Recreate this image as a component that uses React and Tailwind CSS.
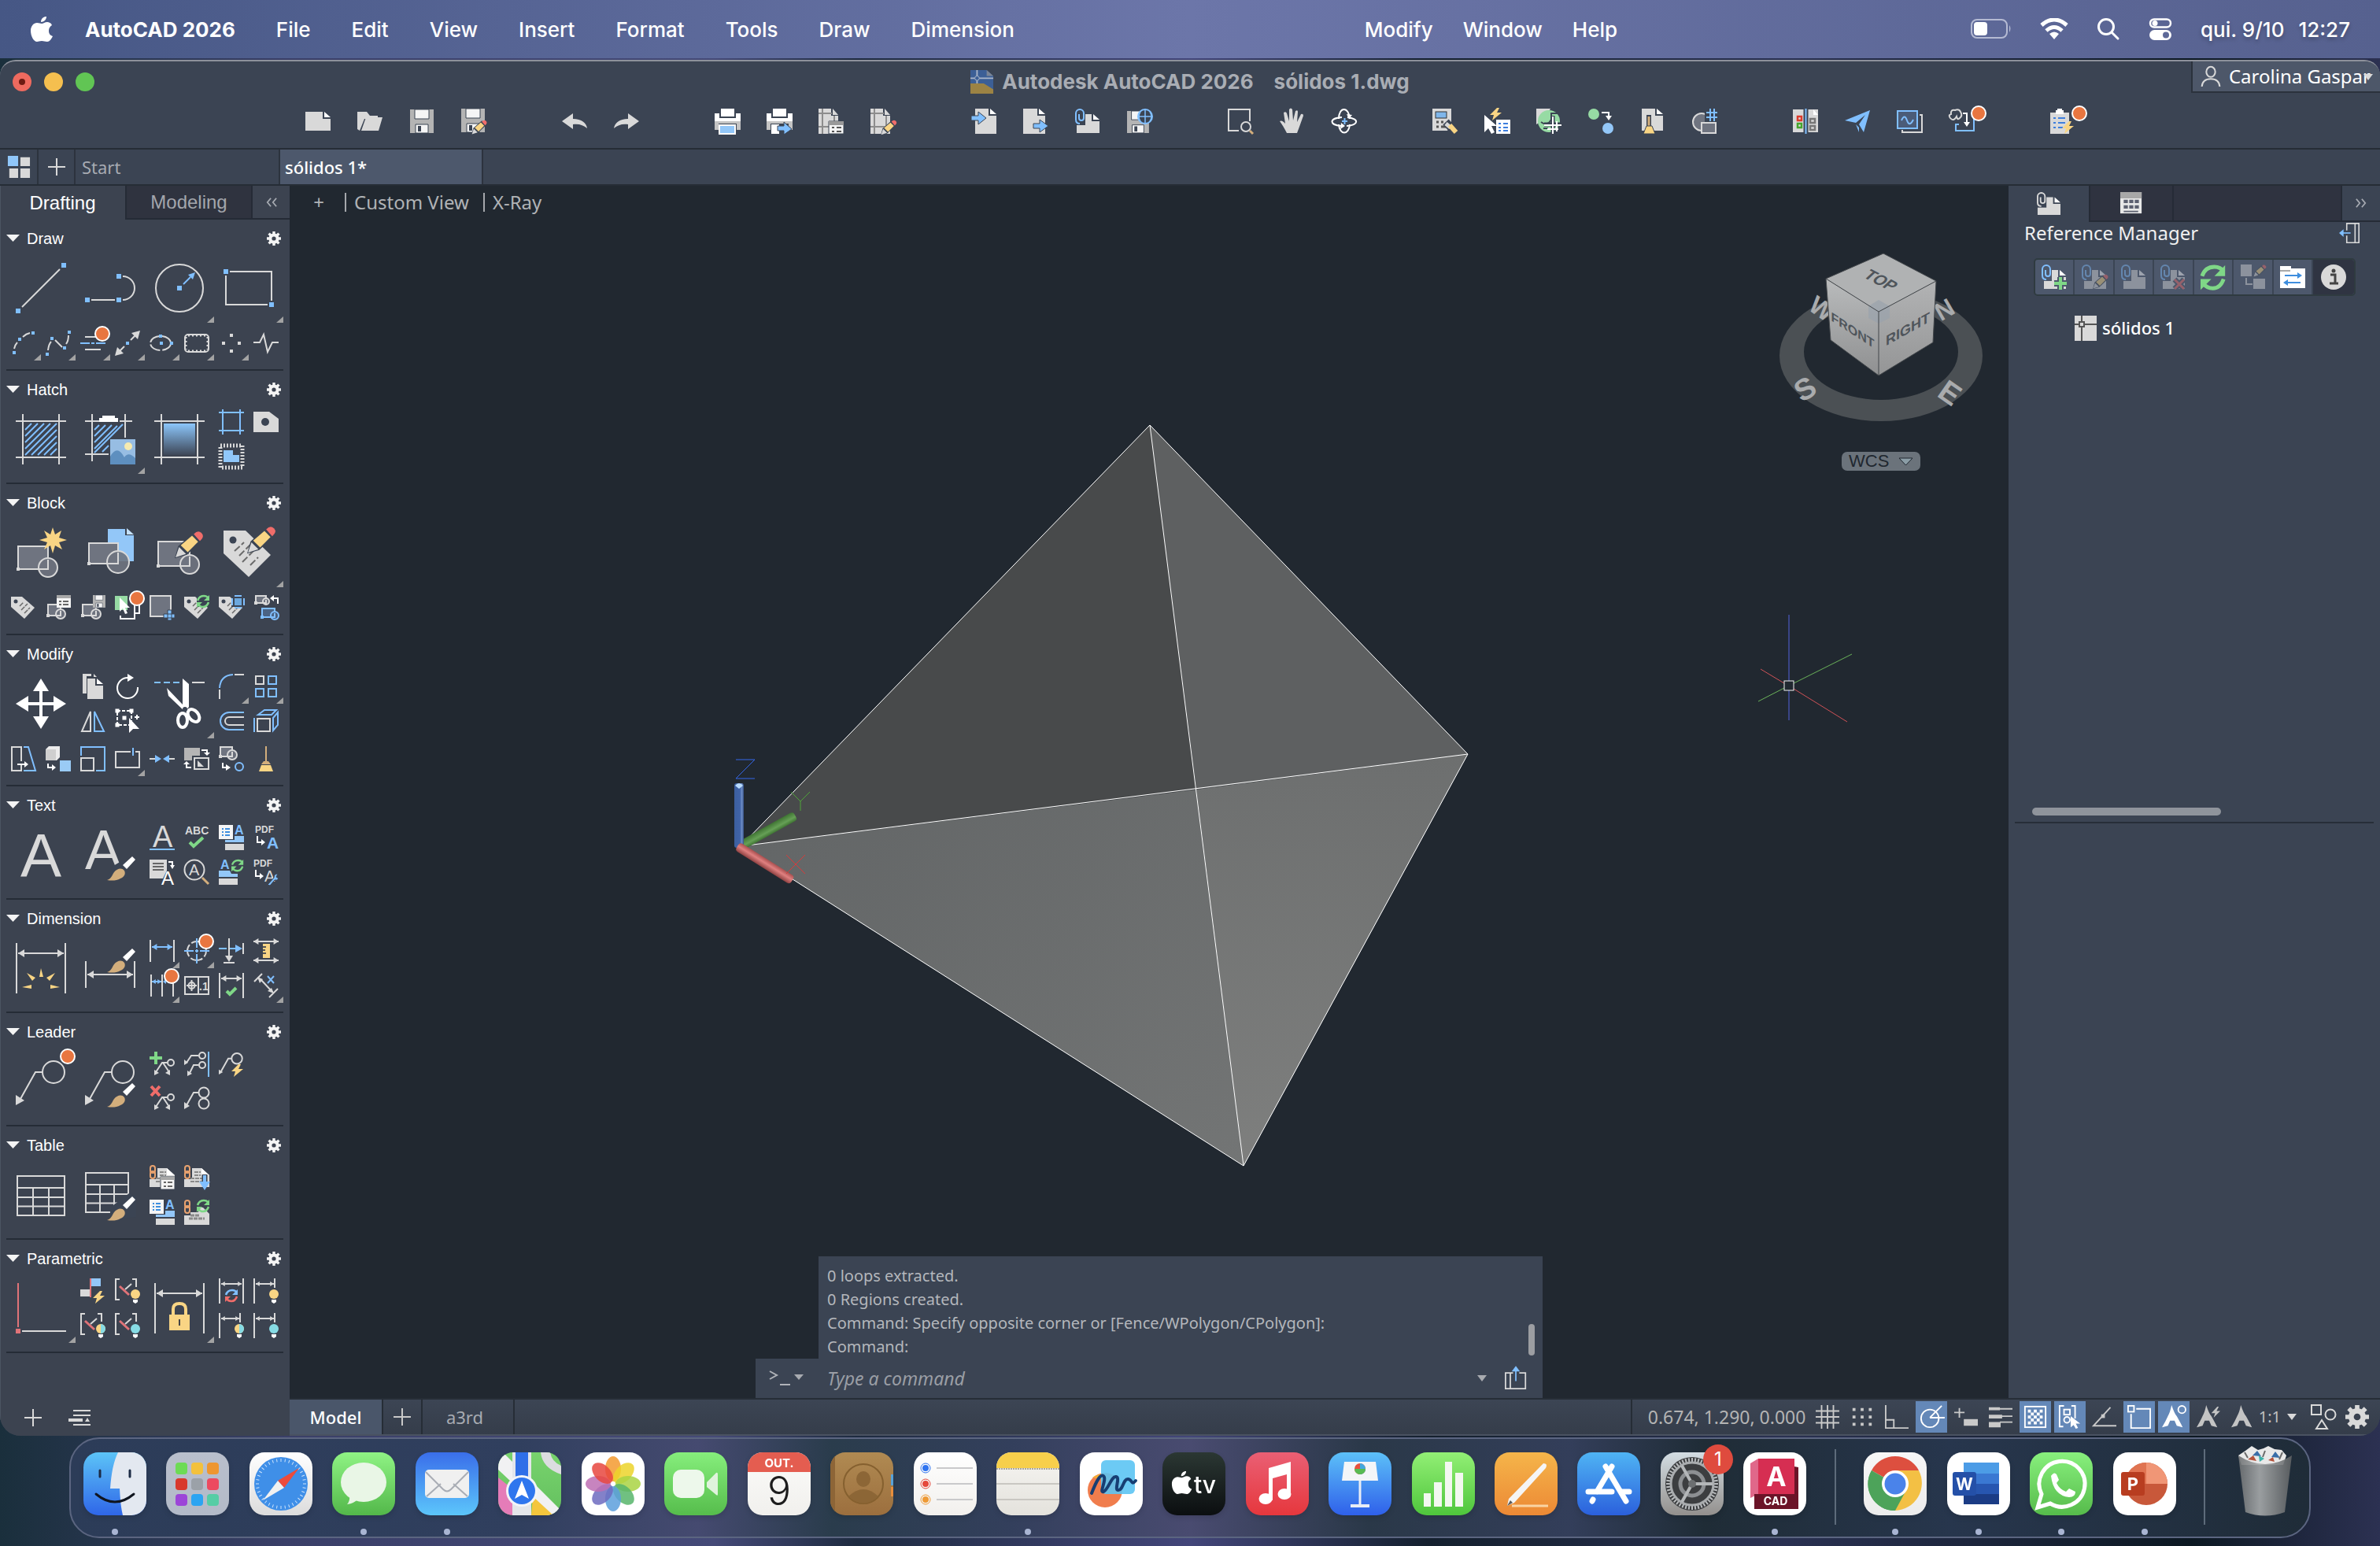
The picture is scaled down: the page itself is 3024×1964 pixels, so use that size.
import clsx from 'clsx';

const G = '#d9d9d9';
const B = '#80bfff';
const W = '#ffffff';
const Y = '#f9d584';
const GR = '#7fd787';
const R = '#f06d6a';
const BG = '#3b4453';
const TAN = '#d3ae7c';
const CY = '#86dbe4';

/* ---------- shared icon parts ---------- */

function Ico({ size = 32, box = size > 32 ? size : 32, children, className }) {
  return (
    <svg
      width={size}
      height={size}
      viewBox={`0 0 ${box} ${box}`}
      fill="none"
      aria-hidden="true"
      className={clsx('overflow-visible shrink-0', className)}
    >
      {children}
    </svg>
  );
}

const Sq = ({ x, y, s = 6, c = B }) => <rect x={x - s / 2} y={y - s / 2} width={s} height={s} fill={c} />;
const Dot = ({ x = 28, y = 4 }) => <circle cx={x} cy={y} r="9" fill="#e87640" stroke={W} strokeWidth="2" />;

const Bolt = ({ x, y, c = Y }) => <path transform={`translate(${x} ${y})`} d="M9 0L0 9h5l-2 7L15 6H9l3-6z" fill={c} />;

const Pencil = ({ x, y, s = 1 }) => (
  <g transform={`translate(${x} ${y}) scale(${s})`}>
    <path d="M0 32L4 18 22 2l10 9-18 17z" fill={BG} />
    <path d="M1 31l4-12 8 8z" fill={G} />
    <path d="M7 17L20 6l7 7-12 12z" fill={Y} />
    <path d="M22 4q5-5 9-1t-2 9z" fill={R} />
  </g>
);

const Brush = ({ x, y }) => (
  <g transform={`translate(${x} ${y})`}>
    <path d="M20 11L32 0l4 4-11 12z" fill={W} />
    <path d="M0 30c6-2 6-6 9-10 4-5 10-6 13-2 2 4 0 8-5 10-5 3-11 3-17 2z" fill={TAN} />
  </g>
);

const Refresh = ({ x, y, s = 1, c = GR, c2 = c }) => (
  <g transform={`translate(${x} ${y}) scale(${s})`} fill="none" strokeWidth="2.5">
    <path d="M1 7q2-6 8-6 4 0 6 3" stroke={c} />
    <path d="M16 0v7h-7z" fill={c} />
    <path d="M15 9q-2 6-7 6-4 0-6-3" stroke={c2} />
    <path d="M0 16V9h7z" fill={c2} />
  </g>
);

const Clip = ({ c = B }) => <path d="M6 19q-5 0-5-5V6a5 5 0 0 1 10 0v6a3 3 0 0 1-6 0V7" stroke={c} strokeWidth="2" />;
const ChainS = ({ c = '#e8a26f' }) => (
  <g stroke={c} strokeWidth="2">
    <rect x="1" y="1" width="6" height="9" rx="3" />
    <rect x="1" y="8" width="6" height="9" rx="3" />
  </g>
);

const Doc = ({ x = 0, y = 0, w = 22, h = 24, c = G }) => (
  <g transform={`translate(${x} ${y})`} fill={c}>
    <path d={`M0 0h${w - 10}v9h10v${h - 9}H0z`} />
    <path d={`M${w - 8} 0l8 7h-8z`} fill={W} />
  </g>
);

const Floppy = ({ x = 0, y = 0, s = 1 }) => (
  <g transform={`translate(${x} ${y}) scale(${s})`}>
    <path d="M0 0h30v30H0z" fill="#b4b4b4" />
    <path d="M6 0h18v12H6z" fill="#f5f5f5" stroke={BG} />
    <path d="M7 19h16v11H7z" fill="#f5f5f5" stroke={BG} />
    <path d="M10 21h4v7h-4z" fill={BG} />
  </g>
);

const Block = ({ x = 0, y = 0, w = 38, h = 29, r = 12, sw = 2, c = G, f = '#6f7480' }) => (
  <g transform={`translate(${x} ${y})`} stroke={c} strokeWidth={sw}>
    <rect width={w} height={h} fill={f} />
    <circle cx={w} cy={h - 2} r={r} fill={f} fillOpacity="0.9" />
    <path d={`M${w} ${h - r}V${h}H${w - r}`} />
    <rect x="-2" y={h - 2} width="4" height="4" fill={c} stroke="none" />
  </g>
);

const Tag = () => (
  <g>
    <path d="M0 2h14l16 14-13 14L0 15z" fill={G} />
    <circle cx="6" cy="8" r="2.5" fill={BG} />
    <path d="M11 14l5-5M13 19l8-8M17 23l7-7" stroke="#6a6a6a" strokeWidth="1.5" strokeDasharray="6 1" />
  </g>
);

// horizontal dimension with two arrowheads
const Dim = ({ x1, x2, y, c = G, a = 4 }) => (
  <g>
    <path d={`M${x1} ${y}H${x2}`} stroke={c} strokeWidth="2" />
    <path d={`M${x1} ${y}l${a * 1.6} ${-a}v${a * 2}zM${x2} ${y}l${-a * 1.6} ${-a}v${a * 2}z`} fill={c} />
  </g>
);

const Bulb = ({ c, half }) => (
  <g>
    <circle cx="26" cy="20" r="6" fill={c} />
    {half && <path d="M26 14a6 6 0 0 1 0 12z" fill={CY} />}
    <path d="M23 27h6v3l-3 2-3-2z" fill={W} />
  </g>
);

const Frame = ({ children }) => (
  <>
    <path d="M0 9H64M0 55H64M9 0V64M55 0V64" stroke={G} strokeWidth="2" />
    {children}
  </>
);
const Stripes = () => (
  <path d="M12 20l8-8M12 28l16-16M12 36l24-24M12 44l32-32M12 52l40-40M20 52l32-32M28 52l24-24M36 52l16-16M44 52l8-8" stroke={B} strokeWidth="2" />
);

const Leader = ({ x = 0, y = 0, s = 1, sw = 2 }) => (
  <g transform={`translate(${x} ${y}) scale(${s})`}>
    <path d="M6 48L25 14h9" stroke={G} strokeWidth={sw} />
    <circle cx="48" cy="14" r="14" stroke={G} strokeWidth={sw} />
    <path d="M0 56V43l11 7z" fill={G} />
  </g>
);
const MiniLeader = () => (
  <g stroke={G} strokeWidth="2">
    <circle cx="27" cy="14" r="4" />
    <path d="M22 14h-6L8 26M17 14l8 12" />
    <path d="M6 30v-7l6 4zM26 30v-7l-6 4z" fill={G} stroke="none" />
  </g>
);

const Grid = ({ x = 0, y = 0, w = 60, h = 50 }) => (
  <path
    transform={`translate(${x} ${y})`}
    d={`M0 0h${w}v${h}H0zM0 ${h * 0.3}h${w}M0 ${h * 0.54}h${w}M0 ${h * 0.77}h${w}M${w / 3} ${h * 0.3}V${h}M${(w * 2) / 3} ${h * 0.3}V${h}`}
    stroke={G}
    strokeWidth="2"
  />
);

const T = ({ x, y, size, c = G, w = 400, children }) => (
  <text x={x} y={y} fontSize={size} fill={c} fontWeight={w} fontFamily="'Liberation Sans', sans-serif">{children}</text>
);

const GearPath = ({ size = 18, color = '#f4f4f4' }) => (
  <Ico size={size} box={18}>
    <circle cx="9" cy="9" r="4.6" stroke={color} strokeWidth="4" />
    <path d="M9 0v4M9 14v4M0 9h4M14 9h4M2.6 2.6l3 3M12.4 12.4l3 3M15.4 2.6l-3 3M5.6 12.4l-3 3" stroke={color} strokeWidth="3.4" />
  </Ico>
);

/* ---------- tool palettes ---------- */
// each tool: [label, drawing, has flyout]

const draw = {
  title: 'Draw',
  main: [
    ['Line', <><path d="M8 56L56 8" stroke={G} strokeWidth="2" /><Sq x={3} y={61} /><Sq x={61} y={3} /></>],
    ['Polyline', <><path d="M8 47h30M48 17a15 15 0 0 1 0 30" stroke={G} strokeWidth="2" /><Sq x={3} y={47} /><Sq x={43} y={47} /><Sq x={43} y={17} /></>],
    ['Circle', <><circle cx="32" cy="32" r="30" stroke={G} strokeWidth="2" /><Sq x={32} y={32} /><path d="M37 27l9-9" stroke={B} strokeWidth="2" /><path d="M52 12l-9 3 6 6z" fill={B} /></>, true],
    ['Rectangle', <><path d="M8 11h53v37M3 16v37h53" stroke={G} strokeWidth="2" /><Sq x={3} y={11} /><Sq x={61} y={53} /></>, true],
  ],
  extra: [
    ['Arc', <><path d="M4 23q1-5 4-8M15 8q4-4 9-5" stroke={G} strokeWidth="2" /><Sq x={4} y={28} s={4} /><Sq x={11} y={11} s={4} /><Sq x={28} y={3} s={4} /></>, true],
    ['Spline', <><path d="M3 25q1-8 4-11M12 12l9 9M26 17q3-4 3-11" stroke={G} strokeWidth="2" /><Sq x={2} y={30} s={4} /><Sq x={8} y={10} s={4} /><Sq x={24} y={22} s={4} /><Sq x={30} y={2} s={4} /></>, true],
    ['Construction line', <><path d="M6 8h14M6 24h20" stroke={G} strokeWidth="2" /><path d="M0 16h12M14 16h4M20 16h12" stroke={B} strokeWidth="2" /><Dot /></>, true],
    ['Ray', <><path d="M5 27l7-7M20 12l7-7" stroke={G} strokeWidth="2" /><path d="M32 0l-3 11-8-8zM0 32l3-11 8 8z" fill={G} /><Sq x={16} y={16} s={4} /></>, true],
    ['Ellipse', <><ellipse cx="14" cy="16" rx="13" ry="9" stroke={G} strokeWidth="2" strokeDasharray="15 3" /><Sq x={14} y={7} s={4} /><Sq x={15} y={16} s={4} /><Sq x={28} y={16} s={4} /></>, true],
    ['Revision cloud', <><rect x="1" y="5" width="30" height="22" rx="4" stroke={G} strokeWidth="2" /><path d="M5 6h23M5 26h23M2 8v16M30 8v16" stroke={G} strokeWidth="3" strokeDasharray="2 3" /></>, true],
    ['Points', <><Sq x={16} y={6} s={4} c={G} /><Sq x={16} y={26} s={4} c={G} /><Sq x={6} y={16} s={4} c={G} /><Sq x={26} y={16} s={4} c={G} /></>, true],
    ['Break line', <path d="M0 15h8l5-10 5 22 6-12h8" stroke={G} strokeWidth="2" />],
  ],
};

const hatch = {
  title: 'Hatch',
  main: [
    ['Hatch', <Frame><Stripes /></Frame>],
    ['Super hatch', <>
      <path d="M0 9h18M44 9h16M0 51h30M9 0v60M51 0v30" stroke={G} strokeWidth="2" />
      <path d="M12 20l6-6M12 28l14-14M12 36l22-22M12 44l29-29M12 49l36-36M22 48l8-8" stroke={B} strokeWidth="2" />
      <path d="M22 2h16v3h4v5H18V5h4z" fill={W} />
      <rect x="32" y="32" width="32" height="32" fill="#97bde3" />
      <circle cx="55" cy="41" r="5" fill="#f5eab0" />
      <path d="M32 54q9-16 18 1 5-8 14 1v8H32z" fill="#5e8fbf" />
    </>, true],
    ['Gradient', <Frame>
      <defs><linearGradient id="hg" x1="0" y1="0" x2="0" y2="1"><stop offset="0" stopColor="#8cc6fb" /><stop offset="1" stopColor="#3e4757" /></linearGradient></defs>
      <rect x="12" y="12" width="40" height="40" fill="url(#hg)" />
    </Frame>],
    ['Boundary', <path d="M0 4h32M0 27h32M5 0v32M27 0v32" stroke={B} strokeWidth="2" />],
    ['Wipeout', <><path d="M0 3h20l12 9v17H0z" fill={G} /><circle cx="15" cy="16" r="5" fill={BG} /></>],
    ['Edit hatch', <><rect x="2" y="2" width="28" height="28" stroke={G} strokeWidth="5" strokeDasharray="2 2" /><path d="M6 8h12v6h8v9H6z" fill="#90c7fa" /></>],
  ],
};

const block = {
  title: 'Block',
  main: [
    ['Create block', <><Block x={3} y={24} /><path d="M47 0l3 9 8-5-3 9 10 3-10 3 4 9-9-5-3 10-3-10-8 5 4-9-10-3 10-3-4-9 8 5z" fill={Y} /></>],
    ['Insert block', <><path d="M29 2h22v8h11v33H29z" fill="#93c7f8" /><path d="M53 1l9 8h-9z" fill="#c4e1fb" /><Block x={5} y={20} w={37} h={26} r={14} /></>],
    ['Edit block', <><Block x={5} y={18} w={40} h={31} /><Pencil x={26} y={4} s={1.1} /></>],
    ['Edit attributes', <><path d="M0 4h28l32 31-28 28L0 33z" fill={G} /><circle cx="12" cy="16" r="4.5" fill={BG} /><path d="M14 30l12-11M20 36l14-14M24 44l16-16M34 48l10-10" stroke="#6a6a6a" strokeWidth="2" strokeDasharray="9 3" /><Pencil x={30} y={-2} s={1.1} /></>, true],
  ],
  extra: [
    ['Define attribute', <Tag />],
    ['Block palette', <><Block x={3} y={12} w={16} h={14} r={6} /><path d="M14 0h18v16H14z" fill="#f5f5f5" /><path d="M14 0h18v4H14z" fill="#a8a8a8" /><path d="M17 8h3M22 8h7M17 12h3M22 12h7" stroke="#666" strokeWidth="2" /></>],
    ['Save block', <><Block x={3} y={12} w={17} h={14} r={6} /><Floppy x={16} y={0} s={0.53} /></>],
    ['Select block', <><path d="M0 1h16v18H0z" fill="#97dba4" /><path d="M24 12h7v11h-5M7 26v4h18V12" stroke={W} strokeWidth="2" /><path d="M6 3v18l4-4 3 7 3-1-3-7h6z" fill={W} /><Dot /></>],
    ['Add block', <><rect x="1" y="1" width="26" height="26" fill="#6f7480" stroke={G} strokeWidth="2" /><path d="M18 24h14v5H18zM23 19h5v13h-5z" fill={B} stroke={BG} /></>],
    ['Sync attributes', <><Tag /><rect x="16" y="0" width="16" height="15" fill={BG} /><Refresh x={16} y={0} /></>],
    ['Manage attributes', <><Tag /><path d="M16 0h16v15H16z" fill={BG} /><rect x="20" y="4" width="9" height="9" fill="#6ca8de" /><path d="M20 1h9M20 16h9M17 4v9M32 4v9" stroke={B} strokeWidth="2" /></>],
    ['Replace block', <><Block x={3} y={1} w={13} h={9} r={4} /><path d="M31 11V4h-7" stroke={W} strokeWidth="2" /><path d="M21 4l5-4v8z" fill={W} /><Block x={11} y={17} w={16} h={11} r={5} c={B} f="#4b6384" /></>],
  ],
};

const modify = {
  title: 'Modify',
  main: [
    ['Move', <><path d="M32 10v44M10 32h44" stroke={W} strokeWidth="4" /><path d="M32 0l10 16H22zM32 64l10-16H22zM0 32l16-10v20zM64 32L48 22v20z" fill={W} /></>],
    ['Copy', <><path d="M3 0h11v3H8v22H3z" fill={G} /><path d="M17 0l4 4h-4z" fill={G} /><Doc x={9} y={6} w={20} h={26} /></>],
    ['Rotate', <><path d="M16 5a13 13 0 1 0 13 12" stroke={W} strokeWidth="2" /><path d="M16 0l8 5-8 5z" fill={W} /></>],
    ['Trim', <><path d="M0 5h8M12 5h8M24 5h8" stroke={B} strokeWidth="2" /><path d="M48 5h16" stroke={G} strokeWidth="2" /><path d="M36 0l8 7v29l-5 6-21-20-2-10 20 21z" fill={W} /><ellipse cx="36" cy="53" rx="6" ry="9" stroke={W} strokeWidth="4" /><ellipse cx="50" cy="47" rx="6" ry="9" transform="rotate(-40 50 47)" stroke={W} strokeWidth="4" /><circle cx="39" cy="39" r="3" fill={BG} /></>, true],
    ['Fillet', <><path d="M1 18Q2 2 18 1" stroke={B} strokeWidth="2" /><path d="M20 1h12M1 20v12" stroke={G} strokeWidth="2" /></>, true],
    ['Array', <g strokeWidth="2"><rect x="3" y="3" width="10" height="10" stroke={G} /><rect x="19" y="3" width="10" height="10" stroke={B} /><rect x="3" y="19" width="10" height="10" stroke={B} /><rect x="19" y="19" width="10" height="10" stroke={B} /></g>, true],
    ['Mirror', <><path d="M13 4v25H2z" stroke={G} strokeWidth="2" /><path d="M18 4v25h12z" stroke={B} strokeWidth="2" /></>],
    ['Stretch selection', <><rect x="3" y="3" width="18" height="18" stroke={W} strokeWidth="2" strokeDasharray="4 2" /><Sq x={3} y={3} s={5} c={W} /><Sq x={21} y={3} s={5} c={W} /><Sq x={3} y={21} s={5} c={W} /><Sq x={12} y={12} s={5} c={W} /><path d="M18 12v19l5-5h8z" fill={W} /><path d="M25 11h6M28 8v6" stroke={W} strokeWidth="2" /></>],
    ['Offset', <><path d="M32 5H13a11 11 0 0 0 0 22h19" stroke={B} strokeWidth="2" /><path d="M32 11H13a5 5 0 0 0 0 10h19" stroke={G} strokeWidth="2" /></>],
    ['Extrude faces', <><rect x="5" y="13" width="16" height="16" stroke={G} strokeWidth="2" /><path d="M6 8l8-6h15l-6 6zM25 12l6-7v16l-6 7zM1 12v18" stroke={B} strokeWidth="2" /></>],
  ],
  extra: [
    ['Stretch', <><path d="M13 24v7H1V1h12v18" stroke={G} strokeWidth="2" /><path d="M16 1h6l9 30H16" stroke={B} strokeWidth="2" /><path d="M8 23h10" stroke={W} strokeWidth="2" /><path d="M22 23l-5-4v8z" fill={W} /></>],
    ['Flatten', <><path d="M0 4l4-4h14v14l-4 4H0z" fill="#ececec" /><path d="M0 4h13v14H0z" fill="#cfcfcf" /><path d="M3 22v5h6" stroke={W} strokeWidth="2" /><path d="M13 27l-5-4v8z" fill={W} /><rect x="18" y="18" width="14" height="14" fill="#9acbf5" /></>],
    ['Scale', <><path d="M1 12V1h30v30H20" stroke={B} strokeWidth="2" /><rect x="1" y="15" width="16" height="16" stroke={G} strokeWidth="2" /></>],
    ['Break', <><path d="M20 7H1v20h30V7h-5" stroke={G} strokeWidth="2" /><path d="M23 2v10" stroke={B} strokeWidth="2" /></>, true],
    ['Join', <><path d="M0 16h8M24 16h8" stroke={G} strokeWidth="2" /><path d="M15 16l-8-5v10zM17 16l8-5v10z" fill={B} /></>],
    ['Draw order', <><path d="M0 2h20v10H10v6H0z" fill="#b5b5b5" /><rect x="13" y="15" width="18" height="14" stroke={G} strokeWidth="2" /><path d="M17 18v8h8z" fill={G} /><path d="M22 5h7v5M9 27H3v-5" stroke={W} strokeWidth="2" /><path d="M29 12l-4-4h8zM3 19l-4 4h8z" fill={W} /></>],
    ['Change space', <><Block x={2} y={1} w={15} h={12} r={6} /><path d="M5 21v6h5" stroke={W} strokeWidth="2" /><path d="M15 27l-6-4v8z" fill={W} /><circle cx="26" cy="26" r="5" stroke={B} strokeWidth="2" /></>],
    ['Purge', <><path d="M16 0v19" stroke={TAN} strokeWidth="2" /><path d="M13 19h6l3 4H10z" fill={TAN} /><path d="M10 24h12l3 8H7z" fill={Y} /></>],
  ],
};

const text = {
  title: 'Text',
  main: [
    ['Multiline text', <T x={6} y={60} size={78}>A</T>],
    ['Match text', <><T x={0} y={50} size={70}>A</T><path d="M28 62l8-16 10-6 6-2 2 22z" fill={BG} /><Brush x={28} y={34} /></>],
    ['Single line text', <><T x={4} y={28} size={38}>A</T><path d="M0 31h32" stroke={B} strokeWidth="2" /></>],
    ['Spell check', <><T x={1} y={12} size={14} w={700}>ABC</T><path d="M7 22l5 5 12-11" stroke={GR} strokeWidth="4" /></>],
    ['Text style', <><path d="M0 0h18v18H0z" fill="#f5f5f5" /><path d="M4 5h2M8 5h6M4 9h2M8 9h6M4 13h2M8 13h6" stroke="#3e8ede" strokeWidth="2" /><T x={20} y={12} size={16} c={B} w={700}>A</T><path d="M20 14h12v8H8v-3h12z" fill="#93c7f8" /><path d="M8 24h24v8H8z" fill={G} /></>],
    ['PDF text', <><T x={2} y={10} size={12} w={700}>PDF</T><path d="M5 14v8h6" stroke={W} strokeWidth="2" /><path d="M15 22l-5-4v8z" fill={W} /><T x={17} y={30} size={21} c={B} w={700}>A</T></>],
    ['Text to mtext', <><path d="M0 0h22v14l-5 10H0z" fill={G} /><path d="M4 5h14M4 9h14M4 13h14" stroke="#666" strokeWidth="2" /><path d="M24 3h5v6" stroke={W} strokeWidth="2" /><path d="M29 12l-3-5h6z" fill={W} /><T x={15} y={32} size={24} c={W}>A</T></>],
    ['Find text', <><circle cx="13" cy="13" r="12.5" stroke={G} strokeWidth="2" /><T x={6} y={20} size={20}>A</T><path d="M23 23l8 8" stroke={TAN} strokeWidth="3" /></>],
    ['Update field', <><T x={2} y={12} size={16} c={B} w={700}>A</T><Refresh x={16} y={0} s={0.95} /><path d="M0 14h14l2 4h8v4H0z" fill="#93c7f8" /><path d="M0 24h24v8H0z" fill={G} /></>],
    ['PDF settings', <><T x={0} y={9} size={12} w={700}>PDF</T><path d="M3 13v8h5" stroke={W} strokeWidth="2" /><path d="M13 21l-5-4v8z" fill={W} /><T x={14} y={28} size={20}>A</T><path d="M18 32l8-9q0-5 5-5l-2 4 3 2q-2 3-5 2l-6 7z" fill={B} stroke={BG} /></>],
  ],
};

const dimension = {
  title: 'Dimension',
  main: [
    ['Smart dimension', <><path d="M1 0v64M63 0v64" stroke={G} strokeWidth="2" /><Dim x1={3} x2={61} y={13} a={5} /><path d="M30 43l2-11 3 11zM21 48l-7-10 11 6zM43 48l7-10-11 6zM20 53v5L8 56zM44 53v5l12-2z" fill={Y} /></>],
    ['Match dimension', <><path d="M1 23v34M63 23v34" stroke={G} strokeWidth="2" /><Dim x1={3} x2={61} y={40} a={5} /><Brush x={28} y={7} /></>],
    ['Linear', <><path d="M1 2v28M31 2v28" stroke={G} strokeWidth="2" /><Dim x1={3} x2={29} y={11} c={B} /></>, true],
    ['Center mark', <><circle cx="16" cy="16" r="12" stroke={G} strokeWidth="2" strokeDasharray="16 3" strokeDashoffset="8" /><path d="M0 16h12M20 16h12M16 0v12M16 20v12M14 16h4M16 14v4" stroke={B} strokeWidth="2" /><Dot x={28} y={4} /></>, true],
    ['Baseline', <><path d="M0 13h10M13 13h8" stroke={B} strokeWidth="2" /><path d="M30 13l-9-5v10z" fill={B} /><path d="M13 0v24M31 6v14M6 31h14" stroke={G} strokeWidth="2" /><path d="M13 30l-5-8h10z" fill={G} /></>],
    ['Space', <><Dim x1={0} x2={32} y={4} /><Dim x1={0} x2={32} y={28} /><rect x="12" y="7" width="9" height="18" fill={Y} /><path d="M12 11h4M12 15h3M12 19h4" stroke="#555" strokeWidth="2" /></>],
    ['Continue', <><path d="M2 2v28M16 2v28M30 10v20" stroke={G} strokeWidth="2" /><Dim x1={3} x2={15} y={11} c={B} a={3} /><path d="M17 11l4-3v6z" fill={B} /><Dot x={28} y={4} /></>, true],
    ['Tolerance', <><path d="M1 5h30v22H1zM18 5v22M3 16h13M9.5 9v14" stroke={G} strokeWidth="2" /><circle cx="9.5" cy="16" r="4" stroke={G} strokeWidth="2" /><T x={19} y={22} size={14} w={700}>.1</T></>],
    ['Inspection', <><path d="M1 0v32M31 0v32" stroke={G} strokeWidth="2" /><Dim x1={3} x2={29} y={7} /><path d="M10 23l4 4 8-8" stroke={GR} strokeWidth="4" /></>],
    ['Oblique', <><path d="M1 11L11 1M20 31l11-11M9 8l15 16" stroke={G} strokeWidth="2" /><path d="M5 5l3 8 4-5zM26 26l-8-3 5-4z" fill={G} /><path d="M18 4l8 9M26 4l-8 9" stroke={B} strokeWidth="2" /></>, true],
  ],
};

const leader = {
  title: 'Leader',
  main: [
    ['Multileader', <><Leader y={6} /><Dot x={66} y={0} /></>],
    ['Match leader', <><Leader y={6} /><Brush x={28} y={34} /></>],
    ['Add leader', <><path d="M0 8h16M8 0v16" stroke={GR} strokeWidth="4" /><MiniLeader /></>],
    ['Align leaders', <><g stroke={G} strokeWidth="2"><circle cx="23" cy="5" r="4" /><path d="M18 5h-9L3 14" /><circle cx="23" cy="17" r="4" /><path d="M18 17h-6L7 27" /></g><path d="M0 17v-7l5 4zM4 31v-7l6 4z" fill={G} /><path d="M31 0v32" stroke={B} strokeWidth="2" /></>],
    ['Quick leader', <><Leader y={2} s={0.48} sw={4} /><Bolt x={16} y={16} /></>],
    null,
    ['Remove leader', <><path d="M2 0l11 12M13 0L2 12" stroke={R} strokeWidth="4" /><MiniLeader /></>],
    ['Collect leaders', <><g stroke={G} strokeWidth="2"><circle cx="25" cy="8" r="6.5" /><circle cx="25" cy="22" r="6.5" /><path d="M18 8h-6L3 24" /></g><path d="M0 29v-9l7 5z" fill={G} /></>],
  ],
};

const Sheet = () => (
  <>
    <path d="M10 4h12l10 9v15H0V18h10z" fill={G} />
    <path d="M22 4l10 9H22z" fill={W} />
    <path d="M13 9h8M13 13h8M8 17h16M8 21h16" stroke="#8a8a8a" strokeWidth="2" strokeDasharray="5 1" />
    <ChainS />
  </>
);
const table = {
  title: 'Table',
  main: [
    ['Table', <Grid x={2} y={8} />],
    ['Match table', <><Grid x={1} y={4} w={54} /><path d="M32 64V48l24-18 9 4v26z" fill={BG} /><Brush x={28} y={34} /></>],
    ['Link data', <><Sheet /><path d="M14 15h18v16H14z" fill="#f5f5f5" stroke={BG} /><path d="M14 15h18v4H14z" fill="#a8a8a8" /><path d="M18 22h3M23 22h6M18 27h3M23 27h6" stroke="#666" strokeWidth="2" /></>],
    ['Download from source', <><Sheet /><path d="M26 12v12" stroke={BG} strokeWidth="7" /><path d="M26 13v10" stroke={B} strokeWidth="4" /><path d="M19 21h14l-7 11z" fill={B} /></>],
    null,
    null,
    ['Table style', <><path d="M0 0h18v18H0z" fill="#f5f5f5" /><path d="M4 5h2M8 5h6M4 9h2M8 9h6M4 13h2M8 13h6" stroke="#3e8ede" strokeWidth="2" /><T x={20} y={12} size={16} c={B} w={700}>A</T><path d="M20 14h12v8H8v-3h12z" fill="#93c7f8" /><path d="M8 24h24v8H8z" fill={G} /></>],
    ['Update data links', <><path d="M0 20h8v-4h10v-6h6l8 8v14H0z" fill={G} /><path d="M8 20h12M6 24h20" stroke="#8a8a8a" strokeWidth="3" strokeDasharray="5 1" /><ChainS /><Refresh x={16} y={0} /></>],
  ],
};

const Brackets = ({ children }) => (
  <>
    <path d="M6 1H1v26h5M22 1h5v10" stroke={G} strokeWidth="2" />
    <path d="M13 14l8-7" stroke={G} strokeWidth="2" />
    <path d="M6 10l12 11" stroke="#e07378" strokeWidth="3" />
    {children}
  </>
);
const parametric = {
  title: 'Parametric',
  main: [
    ['Geometric constraint', <><path d="M3 0v56" stroke="#e07378" strokeWidth="2" /><Sq x={3} y={61} c="#e07378" /><path d="M8 61h56" stroke={G} strokeWidth="2" /></>, true],
    ['Auto constrain', <><rect x="14" width="12" height="10" fill="#93c7f8" /><rect y="14" width="12" height="9" fill={G} /><path d="M13 0v24" stroke="#e07378" strokeWidth="2" /><Bolt x={16} y={16} /></>],
    ['Show constraints', <Brackets><Bulb c={Y} /></Brackets>],
    ['Dimensional constraint', <><path d="M1 0v64M63 0v64" stroke={G} strokeWidth="2" /><Dim x1={3} x2={61} y={13} a={5} /><path d="M24 41v-8q0-7 8-7t8 7v8" stroke={Y} strokeWidth="4" /><rect x="19" y="40" width="26" height="20" fill={Y} /><path d="M32 46v8" stroke="#444" strokeWidth="2" /></>, true],
    ['Convert', <><path d="M1 0v32M31 0v32" stroke={G} strokeWidth="2" /><Dim x1={3} x2={29} y={7} a={3} /><Refresh x={8} y={14} c={B} c2={R} /></>],
    ['Show dimensions', <><path d="M1 0v32M27 0v12" stroke={G} strokeWidth="2" /><Dim x1={3} x2={26} y={7} a={3} /><Bulb c={Y} /></>],
    ['Toggle constraints', <Brackets><Bulb c={Y} half /></Brackets>],
    ['Hide constraints', <Brackets><Bulb c={CY} /></Brackets>],
    ['Toggle dimensions', <><path d="M1 0v32M27 0v12" stroke={G} strokeWidth="2" /><Dim x1={3} x2={26} y={7} a={3} /><Bulb c={Y} half /></>],
    ['Hide dimensions', <><path d="M1 0v32M27 0v12" stroke={G} strokeWidth="2" /><Dim x1={3} x2={26} y={7} a={3} /><Bulb c={CY} /></>],
  ],
};

// positions of the 64px tools inside each palette
const bigTools = {
  Draw: [0, 1, 2, 3],
  Hatch: [0, 1, 2],
  Block: [0, 1, 2, 3],
  Modify: [0, 3],
  Text: [0, 1],
  Dimension: [0, 1],
  Leader: [0, 1],
  Table: [0, 1],
  Parametric: [0, 3],
};

function Tool({ tool, big }) {
  if (!tool) return <div />;
  const [label, art, flyout] = tool;
  return (
    <button
      aria-label={label}
      className={clsx('relative flex items-center justify-center', big ? 'col-span-2 row-span-2 size-[88px]' : 'size-11')}
    >
      <Ico size={big ? 64 : 32}>{art}</Ico>
      {flyout && (
        <svg className="absolute right-0 bottom-0" width="9" height="8" viewBox="0 0 9 8" aria-hidden="true">
          <path d="M9 0v8H0z" fill="#a3a3a3" />
        </svg>
      )}
    </button>
  );
}

function Palette({ data }) {
  return (
    <section className="mx-2 border-b-2 border-[#252c36] pb-[11px]">
      <header className="flex h-[43px] items-center pt-1">
        <button className="flex flex-1 items-center gap-[9px] text-[20px] leading-6 text-white" aria-expanded="true">
          <svg width="17" height="9" viewBox="0 0 17 9" aria-hidden="true"><path d="M0 0h17L8.5 9z" fill="#f4f4f4" /></svg>
          {data.title}
        </button>
        <button aria-label={`${data.title} settings`} className="mr-[3px]"><GearPath size={18} /></button>
      </header>
      <div className="grid auto-rows-[44px] grid-cols-8">
        {data.main.map((t, i) => (
          <Tool key={i} tool={t} big={bigTools[data.title].includes(i)} />
        ))}
      </div>
      {data.extra && (
        <div className="mt-1 grid grid-cols-8">
          {data.extra.map((t, i) => <Tool key={i} tool={t} />)}
        </div>
      )}
    </section>
  );
}

const palettes = [draw, hatch, block, modify, text, dimension, leader, table, parametric];

/* ---------- menu bar ---------- */

const menusLeft = ['File', 'Edit', 'View', 'Insert', 'Format', 'Tools', 'Draw', 'Dimension'];
const menusRight = ['Modify', 'Window', 'Help'];

const Apple = ({ size = 32, color = W }) => (
  <Ico size={size} box={32}>
    <path d="M22 1c0 4-3 7-7 7 0-4 3-7 7-7zM16 10c2 0 4-2 7-2 2 0 5 1 6 4-3 2-4 4-4 7 0 4 2 6 5 7-2 4-4 7-7 7s-4-1-7-1-4 1-6 1c-4 0-8-7-8-14 0-6 4-10 8-10 3 0 4 1 6 1z" fill={color} transform="translate(-1 -1)" />
  </Ico>
);

function MenuBar() {
  return (
    <header className="flex h-[74px] items-center bg-linear-to-r from-[#465785] via-[#6c76a9] to-[#56618f] px-[38px] font-['Inter',sans-serif] text-[26px] font-medium text-white [text-shadow:0_3px_5px_rgb(0_0_0/0.25)]">
      <button aria-label="Apple menu"><Apple /></button>
      <nav className="flex items-center gap-[52px] pl-[38px]">
        <button className="font-bold">AutoCAD 2026</button>
        {menusLeft.map((m) => <button key={m}>{m}</button>)}
      </nav>
      <nav className="ml-[445px] flex items-center gap-[38px]">
        {menusRight.map((m) => <button key={m}>{m}</button>)}
      </nav>
      <div className="ml-auto flex items-center gap-9">
        <svg width="52" height="26" viewBox="0 0 52 26" fill="none" aria-label="Battery">
          <rect x="1" y="1" width="45" height="23" rx="7" stroke="#b5bad3" strokeWidth="2" />
          <rect x="4" y="4" width="17" height="17" rx="4" fill={W} />
          <path d="M49 8q3 4 0 9z" fill="#b5bad3" />
        </svg>
        <svg width="36" height="28" viewBox="0 0 36 28" fill="none" aria-label="Wi-Fi">
          <path d="M2 9q16-14 32 0M8 16q10-9 20 0" stroke={W} strokeWidth="5" />
          <path d="M12 20q6-5 12 0l-6 7z" fill={W} />
        </svg>
        <svg width="30" height="30" viewBox="0 0 30 30" fill="none" aria-label="Search">
          <circle cx="12" cy="12" r="9.5" stroke={W} strokeWidth="3" /><path d="M19 19l8 8" stroke={W} strokeWidth="3" strokeLinecap="round" />
        </svg>
        <svg width="30" height="28" viewBox="0 0 30 28" fill="none" aria-label="Control Centre">
          <rect x="2" y="1.5" width="26" height="10" rx="5" stroke={W} strokeWidth="2.5" /><circle cx="8" cy="6.5" r="3.5" fill={W} />
          <rect x="1" y="15" width="28" height="13" rx="6.5" fill={W} /><circle cx="22" cy="21.5" r="4" fill="#5d6898" />
        </svg>
        <time className="flex gap-[18px]"><span>qui. 9/10</span><span>12:27</span></time>
      </div>
    </header>
  );
}

/* ---------- window toolbar ---------- */

const printer = (
  <>
    <path d="M8 0h17v10H8z" fill={W} /><path d="M0 6h6v6h21V6h6v10H0z" fill={W} /><path d="M0 16h33v11h-5v-8H5v8H0z" fill="#c4c4c4" />
  </>
);
const plotPage = (
  <>
    <path d="M0 0h16v9h9v23H0z" fill={G} /><path d="M18 0l7 8h-7z" fill={G} /><path d="M5 0v32M0 6h17M0 23h25M20 9v23" stroke="#8d8d8d" strokeWidth="2" />
  </>
);

const toolbar = [
  [
    ['New', <Doc x={0} y={4} w={32} h={24} />],
    ['Open', <path d="M0 26V4h12l4 5h10v4H9L3 28zM11 11h21l-5 17H5z" fill={G} />],
    ['Save', <Floppy x={1} y={1} />],
    ['Save as', <><Floppy x={0} y={0} /><Pencil x={13} y={14} s={0.6} /></>],
  ],
  [
    ['Undo', <path d="M0 16L14 6v7c11 0 17 5 18 12-5-4-10-6-18-5v6z" fill={G} />],
    ['Redo', <path d="M32 16L18 6v7C7 13 1 18 0 25c5-4 10-6 18-5v6z" fill={G} />],
  ],
  [
    ['Plot', <>{printer}<rect x="6" y="21" width="20" height="11" fill="#93c7f8" stroke={W} strokeWidth="2" /></>],
    ['Batch plot', <>{printer}<path d="M6 20h10v12H6z" fill={W} /><path d="M14 22h8v-5l10 9-10 7v-5h-8z" fill={B} stroke={BG} /></>],
    ['Page setup', <>{plotPage}<path d="M13 16h19v16H13z" fill="#f5f5f5" stroke={BG} /><path d="M13 16h19v5H13z" fill="#999" /><path d="M17 24h3M23 24h6M17 29h3M23 29h6" stroke="#555" strokeWidth="2" /></>],
    ['Edit page setup', <>{plotPage}<Pencil x={13} y={14} s={0.62} /></>],
  ],
  [
    ['Import', <><Doc x={5} y={0} w={27} h={32} /><path d="M0 9h9V4l10 8-10 8v-5H0z" fill={B} stroke={BG} /></>],
    ['Export', <><Doc x={0} y={0} w={28} h={32} /><path d="M13 19h8v-5l11 8-11 8v-5h-8z" fill={B} stroke={BG} /></>],
    ['Attach', <><Doc x={2} y={7} w={29} h={24} /><path d="M0 0h13v21H0z" fill={BG} /><Clip /></>],
    ['Save to web', <><Floppy x={0} y={3} s={0.93} /><circle cx="23" cy="10" r="9" fill={BG} stroke={B} strokeWidth="2" /><path d="M14 10h18M23 1v18M17 4q-4 6 0 12M29 4q4 6 0 12" stroke={B} strokeWidth="1.5" /></>],
  ],
  [
    ['Zoom window', <><path d="M14 28H1V1h27v15" stroke={G} strokeWidth="2" /><circle cx="23" cy="23" r="6" stroke={G} strokeWidth="2" /><path d="M28 28l4 4" stroke={TAN} strokeWidth="3" /></>],
    ['Pan', <path d="M9 31C6 25 3 20 0 16q3-2 7 3L5 5q3-2 4 1l3 10V1q2-3 4 0l1 14 3-12q3-2 3 1l-1 13 5-10q3-1 3 2l-5 14-3 8z" fill={G} />],
    ['Orbit', <><g stroke={W} strokeWidth="2"><path d="M9 13c0-16 13-16 14 0M9 20c1 14 13 14 14 0" /><path d="M13 11C-4 12-3 21 12 22M20 11c16 2 14 10-1 11" /></g><path d="M12 18l-1 8 6-4zM26 8l-7-1 3 6z" fill={W} /><path d="M13 16h7M16.5 12v8" stroke={B} strokeWidth="2" /></>],
  ],
  [
    ['Quick calculator', <><path d="M0 0h24v20l-5 8H0z" fill={G} /><rect x="4" y="4" width="14" height="8" fill="#7fb6ea" stroke="#333" /><path d="M5 17h3M11 17h3M5 23h3M11 23h6" stroke="#555" strokeWidth="3" /><path d="M17 17l14 15" stroke={BG} strokeWidth="10" /><path d="M17 19l6 5" stroke={G} strokeWidth="5" /><path d="M22 21l8 9" stroke={Y} strokeWidth="6" /></>],
    ['Quick select', <><path d="M0 8v22l5-5 4 7 4-2-4-8h7z" fill={W} /><Bolt x={7} y={-1} /><path d="M15 14h18v18H15z" fill={W} /><path d="M18 19h3M24 19h6M18 24h3M24 24h6M18 28h3M24 28h6" stroke="#3e7fde" strokeWidth="2" /></>],
    ['Geographic location', <><path d="M0 0h18l-8 14-10 6z" fill={G} /><circle cx="16" cy="16" r="14" fill="#97dba4" /><path d="M6 17q8 6 13-3V6h8M9 25h6" stroke={BG} strokeWidth="2" /><path d="M10 20h22M21 9v23" stroke={BG} strokeWidth="5" /><path d="M10 21h22M14 26h14M21 10v22M26 16v13" stroke={W} strokeWidth="2" /></>],
    ['Match layers', <><circle cx="7" cy="7" r="7" fill="#97dba4" /><circle cx="25" cy="25" r="7" fill="#93c7f8" /><path d="M17 5h9v5" stroke={W} strokeWidth="2" /><path d="M26 15l-4-6h8z" fill={W} /></>],
    ['Cleanup', <><Doc x={2} y={0} w={27} h={28} /><path d="M11 8v14" stroke={BG} strokeWidth="6" /><path d="M11 10v12" stroke={TAN} strokeWidth="3" /><path d="M8 22h7l4 10H4z" fill={Y} stroke={BG} /></>],
    ['Count', <><circle cx="12" cy="17" r="11" fill="#6f7480" stroke={G} strokeWidth="2" /><path d="M12 18h18v13H12z" fill="#6f7480" stroke={G} strokeWidth="2" /><path d="M16 -1h17v18H16z" fill={BG} /><path d="M18 5h14M18 11h14M23 0v16M28 0v16" stroke={B} strokeWidth="2" /></>],
  ],
  [
    ['Compare', <><path d="M0 1h32v29H0z" fill={G} /><path d="M26 1l6 7h-6z" fill={W} /><path d="M16.5 0v32" stroke={BG} strokeWidth="6" /><path d="M16.5 0v32" stroke={B} strokeWidth="2" /><g strokeWidth="2.5"><path d="M6 10h5v5H6z" stroke="#dd3b2c" /><path d="M6 19h5v5H6z" stroke="#45a52c" /><path d="M22 13h6v5h-6zM22 22h6v5h-6z" stroke="#777" /></g></>],
    ['Share', <path d="M0 15L32 2 24 30 18 20 26 8 14 18zM14 20l4 10v-6z" fill={B} />],
    ['View', <><path d="M1 3h25v22H1z" fill="#4b5c78" stroke={B} strokeWidth="2" /><path d="M6 15q4-9 7 0t8-1" stroke={B} strokeWidth="2" /><path d="M29 8h3v22H7v-3" stroke={G} strokeWidth="2" /></>],
    ['Trace', <><path d="M2 12q-3-4 1-5-1-6 5-5 5-2 7 2 3 5-1 8-3 3-4-2-4 7-8 2z" stroke={G} strokeWidth="2" /><path d="M13 20H9v8h23V12" stroke={B} strokeWidth="2" /><path d="M18 6h5v13" stroke={W} strokeWidth="2" /><path d="M23 23l-4-6h8z" fill={W} /><Dot x={38} y={6} /></>],
  ],
  [['Activity insights', <><path d="M1 5h24v27H1z" fill={G} /><path d="M8 2h10v5H8zM10 0h6v4h-6z" fill={W} /><path d="M5 12h3M11 12h9M5 18h3M11 18h9M5 24h3M11 24h6" stroke="#3e7fde" strokeWidth="2" /><Bolt x={16} y={16} /><Dot x={38} y={6} /></>]],
];

function WindowHeader() {
  return (
    <>
      <div className="grid h-[52px] grid-cols-[1fr_auto_1fr] items-center">
        <div className="flex gap-4 pl-4">
          <button aria-label="Close" className="flex size-6 items-center justify-center rounded-full bg-[#ee6a5f]">
            <span className="size-2 rounded-full bg-[#6d1a12]" />
          </button>
          <button aria-label="Minimise" className="size-6 rounded-full bg-[#f5bf4f]" />
          <button aria-label="Zoom window frame" className="size-6 rounded-full bg-[#61c554]" />
        </div>
        <h1 className="flex items-center gap-[10px] font-['Inter',sans-serif] text-[26px] leading-8 font-bold text-[#a9adb4]">
          <Ico size={30}>
            <path d="M0 0h22l9 8v24H0z" fill="#3c5f96" /><path d="M22 0l9 8h-9z" fill="#7b8596" />
            <path d="M0 18h18l13 8v6H0z" fill="#9c8344" /><path d="M9 0v18M0 11h31" stroke="#aab6ca" strokeWidth="2" /><circle cx="9" cy="11" r="3" stroke="#aab6ca" fill="#3c5f96" />
          </Ico>
          <span>Autodesk AutoCAD 2026</span>
          <span className="ml-4">sólidos 1.dwg</span>
        </h1>
        <button className="relative flex h-10 items-center gap-[10px] self-start justify-self-end border-b-2 border-l-2 border-[#2b323c] bg-[#4d5769] pr-3 pl-[10px] text-[24px] leading-9 text-white">
          <Ico size={26}>
            <ellipse cx="16" cy="9" rx="7" ry="8" stroke={G} strokeWidth="2.5" /><path d="M2 32q1-12 14-12t14 12" stroke={G} strokeWidth="2.5" />
          </Ico>
          Carolina Gaspar
          <svg className="absolute right-[9px] top-4" width="12" height="8" viewBox="0 0 12 8" aria-hidden="true"><path d="M0 0h12L6 8z" fill={G} /></svg>
        </button>
      </div>
      <div role="toolbar" aria-label="Quick access" className="mb-[10px] flex h-12 items-center gap-24 pl-[388px]">
        {toolbar.map((group, i) => (
          <div key={i} className="flex gap-[34px]">
            {group.map(([label, art]) => (
              <button key={label} aria-label={label}><Ico>{art}</Ico></button>
            ))}
          </div>
        ))}
      </div>
      <nav className="flex h-12 items-stretch border-y-2 border-[#262d36] text-[22px]" aria-label="Open drawings">
        <button aria-label="Overview" className="flex w-[49px] items-center justify-center border-r-2 border-[#2c333e]">
          <Ico size={30}><path d="M1 1h14v14H1z" fill="#90c7fa" /><path d="M18 3h13v12H18zM3 18h12v13H3zM18 18h13v13H18z" fill={G} /></Ico>
        </button>
        <button aria-label="New drawing" className="flex w-[47px] items-center justify-center border-r-2 border-[#2c333e]">
          <Ico size={22} box={22}><path d="M11 0v22M0 11h22" stroke={G} strokeWidth="2" /></Ico>
        </button>
        <button className="w-[260px] border-r-2 border-[#2c333e] pl-2 text-left text-[#a7abb2]">Start</button>
        <button className="w-[258px] border-r-2 border-[#2c333e] bg-[#4d586c] pl-[6px] text-left font-medium text-white">sólidos 1*</button>
      </nav>
    </>
  );
}

/* ---------- drawing area ---------- */

function Model() {
  return (
    <svg className="absolute inset-0 h-full w-full" viewBox="368 236 2184 1540" role="img" aria-label="Pyramid">
      <defs>
        <linearGradient id="faceLow" x1="0" y1="0" x2="1" y2="1"><stop offset="0" stopColor="#626566" /><stop offset="1" stopColor="#737575" /></linearGradient>
        <linearGradient id="faceRight" x1="0" y1="0" x2="0" y2="1"><stop offset="0" stopColor="#6d6f6f" /><stop offset="1" stopColor="#7e7f7e" /></linearGradient>
        <linearGradient id="barX" x1="0" y1="0" x2="0" y2="1"><stop offset="0" stopColor="#a84f4f" /><stop offset="0.45" stopColor="#e08080" /><stop offset="1" stopColor="#8f4242" /></linearGradient>
        <linearGradient id="barY" x1="0" y1="0" x2="0" y2="1"><stop offset="0" stopColor="#3f7433" /><stop offset="0.6" stopColor="#66a056" /><stop offset="1" stopColor="#3f7433" /></linearGradient>
        <linearGradient id="barZ"><stop offset="0" stopColor="#3c5fa0" /><stop offset="0.6" stopColor="#4063a8" /><stop offset="0.8" stopColor="#6c8cc4" /><stop offset="1" stopColor="#334e85" /></linearGradient>
      </defs>
      <path d="M1461 540L941 1075 1520 1003z" fill="#484a4b" />
      <path d="M1461 540L1865 958 1520 1003z" fill="#5e6061" />
      <path d="M941 1075L1580 1481 1520 1003z" fill="url(#faceLow)" />
      <path d="M1865 958L1580 1481 1520 1003z" fill="url(#faceRight)" />
      <path d="M1461 540L941 1075 1580 1481 1865 958zL1580 1481M941 1075L1865 958" fill="none" stroke="#ffffff" strokeWidth="1" />

      <g fill="none" strokeWidth="1">
        <path d="M2273 781v84M2273 877v38" stroke="#5563dd" />
        <path d="M2234 891l33-17M2279 868l74-37" stroke="#6bb35a" />
        <path d="M2237 850l30 18M2279 875l68 42" stroke="#cf5257" />
        <rect x="2267" y="865" width="12" height="12" stroke="#f4f4f4" />
      </g>

      <g>
        <rect x="0" y="-6" width="76" height="12" rx="4" fill="url(#barY)" transform="translate(944 1073) rotate(-29)" />
        <rect x="933" y="995" width="12" height="82" rx="3" fill="url(#barZ)" />
        <path d="M934 998q5-6 10 0l-5 4z" fill="#b9dcff" />
        <rect x="0" y="-6" width="82" height="12" rx="4" fill="url(#barX)" transform="translate(937 1075) rotate(32)" />
        <g fill="none" strokeWidth="1">
          <path d="M935 965h24l-24 24h24" stroke="#3566e8" />
          <path d="M1005 1006l12 12v12M1017 1018l12-12" stroke="#4fa33a" />
          <path d="M999 1086l24 24M1023 1086l-24 24" stroke="#d93a3a" />
        </g>
      </g>
    </svg>
  );
}

function ViewCube() {
  return (
    <div className="absolute top-[78px] right-8 flex w-[260px] flex-col items-center">
      <svg width="260" height="230" viewBox="2260 314 260 230" aria-label="View cube" role="img">
        <defs>
          <linearGradient id="cubeL" x1="0" y1="0" x2="0" y2="1"><stop offset="0" stopColor="#b9bbbc" /><stop offset="1" stopColor="#8f9091" /></linearGradient>
          <linearGradient id="cubeR" x1="0" y1="0" x2="0" y2="1"><stop offset="0" stopColor="#b2b3b4" /><stop offset="1" stopColor="#949596" /></linearGradient>
        </defs>
        <path fillRule="evenodd" d="M2261 452a129 83 0 1 0 258 0a129 83 0 1 0 -258 0zM2292 447a98 61 0 1 0 196 0a98 61 0 1 0 -196 0z" fill="#4b5054" />
        <g fontFamily="'Liberation Sans', sans-serif" fontWeight="700" fill="#a9abad" fontSize="32" textAnchor="middle">
          <text transform="translate(2314 393) rotate(35)" y="10">W</text>
          <text transform="translate(2471 394) rotate(-30)" y="10">N</text>
          <text transform="translate(2294 495) rotate(-30)" y="12" fontSize="38">S</text>
          <text transform="translate(2477 500) rotate(35)" y="12" fontSize="38">E</text>
        </g>
        <path d="M2393 322l67 35-73 39-67-42z" fill="#b0b2b3" />
        <path d="M2320 354l67 42v81l-61-45z" fill="url(#cubeL)" />
        <path d="M2460 357l-73 39v81l69-42z" fill="url(#cubeR)" />
        <path d="M2387 381l14 8v15l-14 7-13-7v-15z" fill="#9aa3ad" fillOpacity="0.7" />
        <path d="M2393 322l67 35-4 78-69 42-61-45-6-78zM2320 354l67 42 73-39M2387 396v81" fill="none" stroke="#43474b" strokeWidth="1" />
        <g fontFamily="'Liberation Sans', sans-serif" fontWeight="700" fill="#4f555b" textAnchor="middle">
          <text transform="translate(2390 356) rotate(27) skewX(-20)" y="7" fontSize="20">TOP</text>
          <text transform="translate(2354 418) skewY(33)" y="7" fontSize="16">FRONT</text>
          <text transform="translate(2424 417) skewY(-29)" y="7" fontSize="18">RIGHT</text>
        </g>
      </svg>
      <button className="mt-[30px] flex h-6 w-[100px] items-center justify-between rounded-[7px] bg-[#6b737b] px-[9px] font-['Liberation_Sans',sans-serif] text-[22px] leading-6 text-[#20272f]">
        WCS
        <svg width="19" height="11" viewBox="0 0 19 11" fill="none" aria-hidden="true"><path d="M1 1h17l-8.5 9z" fill="#8b9da6" stroke="#20272f" /></svg>
      </button>
    </div>
  );
}

const history = [
  '0 loops extracted.',
  '0 Regions created.',
  'Command: Specify opposite corner or [Fence/WPolygon/CPolygon]:',
  'Command:',
];

function CommandLine() {
  return (
    <div className="relative mx-auto mt-auto w-[1000px] text-[20px] text-[#b4b7bc]">
      <div className="ml-20 flex h-[130px] items-end bg-[#3b4453] pr-[10px] pl-[11px]">
        <ul className="flex-1 leading-[30px]">
          {history.map((line) => <li key={line}>{line}</li>)}
        </ul>
        <div className="mb-1 h-10 w-2 rounded-full bg-[#9c9ea2]" />
      </div>
      <div className="flex h-[50px] items-center bg-[#3b4453] pr-[20px] pl-[17px]">
        <button aria-label="Command history" className="flex w-[74px] items-center">
          <svg width="44" height="20" viewBox="0 0 44 20" fill="none" aria-hidden="true">
            <path d="M1 1l9 5-9 5M14 18h13" stroke="#b0b3b8" strokeWidth="2" /><path d="M32 5h12l-6 7z" fill="#a8abb0" />
          </svg>
        </button>
        <input
          aria-label="Command"
          placeholder="Type a command"
          className="flex-1 bg-transparent text-[23px] italic outline-none placeholder:text-[#9a9ea5]"
        />
        <svg width="12" height="8" viewBox="0 0 12 8" className="mr-[23px]" aria-hidden="true"><path d="M0 0h12L6 8z" fill="#a8abb0" /></svg>
        <button aria-label="Float command line">
          <Ico size={28}><path d="M12 8H1v23h29V8h-9M8 9v21" stroke={G} strokeWidth="2" /><path d="M16 4v16" stroke={B} strokeWidth="2" /><path d="M16 -2l6 8H10z" fill={B} /></Ico>
        </button>
      </div>
    </div>
  );
}

/* ---------- reference manager ---------- */

const Ref = ({ children }) => <><Doc x={3} y={7} w={28} h={24} /><path d="M0 0h13v21H0z" fill="#4d586c" /><Clip />{children}</>;
const refTools = [
  ['Attach reference', <Ref><path d="M16 24h16M24 16v16" stroke="#4d586c" strokeWidth="8" /><path d="M16 24h16M24 16v16" stroke={GR} strokeWidth="4" /></Ref>],
  ['Edit reference', <Ref><Pencil x={14} y={12} s={0.6} /></Ref>, true],
  ['Open reference', <Ref />, true],
  ['Detach reference', <Ref><path d="M18 19l12 12M30 19L18 31" stroke="#4d586c" strokeWidth="7" /><path d="M18 19l12 12M30 19L18 31" stroke={R} strokeWidth="3" /></Ref>, true],
  ['Refresh', <Refresh x={0} y={1} s={1.95} />],
  ['Rename', <><path d="M1 0h14v15H1zM17 18h15v13H17z" fill={G} /><path d="M8 17v8h8" stroke={G} strokeWidth="2" /><Pencil x={17} y={0} s={0.5} /></>, true],
  ['Options', <><path d="M0 2h14v3h18v25H0z" fill={W} /><path d="M6 14h18M8 23h18" stroke="#3e8ede" strokeWidth="2" /><path d="M28 14l-6-4v8zM4 23l6-4v8z" fill="#3e8ede" /><path d="M0 8h13" stroke="#555" /></>],
];

function ReferencePanel() {
  return (
    <aside className="flex w-[472px] shrink-0 flex-col bg-[#3b4453]">
      <div className="flex h-[46px] bg-[#2f3340]" role="tablist">
        <button role="tab" aria-selected="true" aria-label="Reference manager tab" className="flex w-[104px] items-center justify-center border-r-2 border-[#252b36] bg-[#3b4453]">
          <Ico size={30}><Doc x={1} y={7} w={31} h={24} /><path d="M0 0h13v21H0z" fill={BG} /><Clip c={G} /></Ico>
        </button>
        <button role="tab" aria-selected="false" aria-label="Tool palettes tab" className="flex w-[106px] items-center justify-center border-r-2 border-b-2 border-[#252b36]">
          <Ico size={28}><path d="M0 0h31v31H0z" fill="#e8e8e8" /><path d="M0 0h31v9H0z" fill="#a8a8a8" /><path d="M5 11h6v5H5zM13 11h6v5h-6zM21 11h6v5h-6zM5 19h6v5H5zM13 19h6v5h-6zM21 19h6v5h-6zM5 27h21v2H5z" fill="#5c6070" /></Ico>
        </button>
        <div className="flex-1 border-b-2 border-[#252b36]" />
        <button aria-label="Collapse panel" className="flex w-[50px] items-center justify-center border-b-2 border-l-2 border-[#252b36] bg-[#3b4453]">
          <Ico size={14}><path d="M2 4l10 12L2 28M18 4l10 12-10 12" stroke="#a7abb2" strokeWidth="4" /></Ico>
        </button>
      </div>
      <div className="flex h-7 items-center justify-between pr-[26px] pl-5">
        <h2 className="text-[24px] leading-7 text-[#f0f0f0]">Reference Manager</h2>
        <button aria-label="Dock panel">
          <Ico size={26}><path d="M12 12V1h19v30H12V20M25 1v30" stroke={G} strokeWidth="2" /><path d="M4 16h14" stroke={B} strokeWidth="2" /><path d="M0 16l7-6v12z" fill={B} /></Ico>
        </button>
      </div>
      <div className="mt-[18px] mr-[31px] ml-8 flex h-12 overflow-hidden rounded-[5px] border-2 border-[#2f3b40] bg-[#4d586c]" role="toolbar" aria-label="Reference tools">
        {refTools.map(([label, art, off]) => (
          <button key={label} aria-label={label} disabled={off} className="flex flex-1 items-center justify-center border-r-2 border-[#3b4554]">
            <Ico className={off ? 'opacity-45' : ''}>{art}</Ico>
          </button>
        ))}
        <button aria-label="Details" className="flex w-[52px] items-center justify-center bg-[#2f3442]">
          <Ico><circle cx="16" cy="16" r="16" fill={G} /><path d="M12 13h6v10M11 24h11" stroke="#444" strokeWidth="3" /><circle cx="16" cy="8" r="2.5" fill="#444" /></Ico>
        </button>
      </div>
      <div className="flex h-[660px] flex-col pl-[84px]">
        <button className="mt-6 flex items-center gap-[7px] self-start text-[22px] font-medium text-white">
          <svg width="28" height="32" viewBox="0 0 28 32" aria-hidden="true"><path d="M0 0h28v32H0z" fill={G} /><path d="M9 0v32M0 11h28" stroke="#555" strokeWidth="2" /><rect x="6" y="8" width="6" height="6" fill={G} stroke="#555" strokeWidth="2" /></svg>
          sólidos 1
        </button>
        <div className="-ml-[54px] mt-auto h-[10px] w-60 rounded-full bg-[#8f949c]" />
      </div>
      <div className="mx-2 mt-2 h-[2px] bg-[#272e38]" />
    </aside>
  );
}

/* ---------- status bar ---------- */

const Annot = ({ c = '#c4c4c4', children }) => (
  <><path d="M13 0q4 12 7 15 5 9 8 15l-8-2-3-7h-6l-3 7-8 2q5-8 8-15 3-5 5-15z" fill={c} />{children}</>
);
const statusTools = [
  ['Grid', <path d="M0 8h32M0 16h32M0 24h32M8 0v32M16 0v32M24 0v32" stroke="#c9c9c9" strokeWidth="2" />],
  ['Snap', <path d="M3 6h26M3 16h26M3 26h26" stroke="#c9c9c9" strokeWidth="4" strokeDasharray="4 7" />],
  ['Ortho', <path d="M1 0v31h31M1 20h11v11" stroke="#c9c9c9" strokeWidth="2" />],
  ['Polar tracking', <><circle cx="14" cy="18" r="12" stroke={W} strokeWidth="2" /><path d="M14 17h20M14 17L30 1" stroke={W} strokeWidth="2" /></>, true],
  ['Dynamic input', <><path d="M0 10h14M7 4v13" stroke="#c9c9c9" strokeWidth="2" /><path d="M13 19h19v9H13z" fill="#c9c9c9" /></>],
  ['Lineweight', <path d="M0 3h15v1h17v2H15v1H0zM0 13h18v1h14v2H18v2H0zM0 23h15v-1h17v2H16v6H0z" fill="#c9c9c9" />],
  ['Transparency', <><rect x="2" y="2" width="28" height="28" stroke={W} strokeWidth="2" /><path d="M6 8h20M6 16h20M6 24h20" stroke={W} strokeWidth="4" strokeDasharray="4 4" /><path d="M10 12h16M10 20h16" stroke={W} strokeWidth="4" strokeDasharray="4 4" /></>, true],
  ['Selection cycling', <><path d="M8 1H2v28h5M18 1h5v17" stroke={W} strokeWidth="2" /><rect x="8" y="6" width="8" height="7" stroke={W} strokeWidth="2" /><circle cx="12" cy="20" r="4" stroke={W} strokeWidth="2" /><path d="M17 15v15l4-3 3 5 3-1-3-6h6z" fill={W} /></>, true],
  ['Object tracking', <><path d="M32 28H1L24 3" stroke="#c9c9c9" strokeWidth="2" /><Sq x={14} y={15} s={5} c="#c9c9c9" /></>],
  ['Object snap', <><path d="M12 5h19v26H5V12" stroke={W} strokeWidth="2" /><rect x="1" y="1" width="8" height="8" stroke={W} strokeWidth="2" /></>, true],
  ['Annotation visibility', <Annot c={W}><circle cx="27" cy="6" r="5" stroke={W} strokeWidth="2" /></Annot>, true],
  ['Annotation autoscale', <Annot><path d="M28 2l-8 9h5l-2 6 9-9h-5l3-6z" fill="#c4c4c4" /></Annot>],
  ['Annotation scale', <Annot />],
];

function StatusBar() {
  return (
    <footer className="flex h-12 items-stretch border-y-2 border-t-[#262d36] border-b-[#4a5261] bg-linear-to-b from-[#3c4554] to-[#353d4a] text-[22px]">
      <button className="w-[119px] border-r-2 border-[#262d36] bg-[#4a566a] font-medium text-white">Model</button>
      <button aria-label="New layout" className="flex w-[50px] items-center justify-center border-r-2 border-[#262d36]">
        <Ico size={22} box={22}><path d="M11 0v22M0 11h22" stroke="#c9c9c9" strokeWidth="2" /></Ico>
      </button>
      <button className="w-[117px] border-r-2 border-[#262d36] pr-2 text-[#a7abb2]">a3rd</button>
      <div className="ml-auto flex items-center border-l-2 border-[#262d36] pr-[14px] pl-5">
        <span className="mr-2 w-[200px] text-[23px] whitespace-nowrap text-[#b4b4b4]">0.674, 1.290, 0.000</span>
        <div className="flex gap-1">
          {statusTools.map(([label, art, on]) => (
            <button key={label} aria-label={label} aria-pressed={!!on} className={clsx('flex size-10 items-center justify-center', on && 'bg-[#6488b8]')}>
              <Ico size={30}>{art}</Ico>
            </button>
          ))}
        </div>
        <button className="flex items-center gap-2 text-[20px] text-[#c0c0c0]">
          1:1
          <svg width="12" height="8" viewBox="0 0 12 8" aria-hidden="true"><path d="M0 0h12L6 8z" fill={G} /></svg>
        </button>
        <button aria-label="Isolate objects" className="mr-3 ml-[18px]">
          <Ico><path d="M1 1h12v12H1z" stroke={G} strokeWidth="2" /><circle cx="25" cy="13" r="6.5" stroke={G} strokeWidth="2" /><path d="M14 20l7 11H7z" stroke={G} strokeWidth="2" /></Ico>
        </button>
        <button aria-label="Customisation"><GearPath size={30} color={G} /></button>
      </div>
    </footer>
  );
}

/* ---------- dock ---------- */

const Plate = ({ id, from, to = from, children }) => (
  <svg width="80" height="80" viewBox="0 0 80 80" fill="none" aria-hidden="true" className="drop-shadow-md">
    <defs>
      <linearGradient id={id} x1="0" y1="0" x2="0" y2="1"><stop offset="0" stopColor={from} /><stop offset="1" stopColor={to} /></linearGradient>
      <clipPath id={`${id}c`}><rect width="80" height="80" rx="19" /></clipPath>
    </defs>
    <g clipPath={`url(#${id}c)`}><rect width="80" height="80" fill={`url(#${id})`} />{children}</g>
  </svg>
);
const DT = ({ x, y, size, c = W, w = 700, children }) => (
  <text x={x} y={y} fontSize={size} fill={c} fontWeight={w} textAnchor="middle" fontFamily="Inter, sans-serif">{children}</text>
);
const ring = (n, f) => Array.from({ length: n }, (_, i) => f(i * (360 / n), i));

const apps = [
  ['Finder', true, <Plate id="d1" from="#5cc4f7" to="#2f66e8">
    <path d="M44 0h36v80H50q-3-12-4-34H34Q36 16 44 0z" fill="#e3e8f0" />
    <path d="M21 23v8M59 23v8" stroke="#1c2b45" strokeWidth="3" strokeLinecap="round" /><path d="M16 53q24 20 48 0" stroke="#10151f" strokeWidth="3" strokeLinecap="round" />
  </Plate>],
  ['Launchpad', false, <Plate id="d2" from="#b9bfcc" to="#b3bac8">
    {['#6ddb55', '#f3c13d', '#ee9630', '#d8382c', '#9ba1a8', '#ec4a60', '#9c45d8', '#2ca4f2', '#56cda5'].map((c, i) => (
      <rect key={c} x={12 + (i % 3) * 20} y={13 + Math.floor(i / 3) * 20} width="15" height="15" rx="4" fill={c} />
    ))}
  </Plate>],
  ['Safari', false, <Plate id="d3" from="#ffffff" to="#dcdcdc">
    <circle cx="40" cy="40" r="34" fill="#3f8fe8" />
    {ring(36, (a) => <path key={a} d="M40 8v4" stroke="#cfe4fb" strokeWidth="1" transform={`rotate(${a} 40 40)`} />)}
    <path d="M63 20L44 45l-8-9z" fill="#ec4b3c" /><path d="M17 61l19-25 8 9z" fill="#f1f1f1" />
  </Plate>],
  ['Messages', true, <Plate id="d4" from="#8ff384" to="#53b84a">
    <ellipse cx="40" cy="38" rx="29" ry="25" fill="#e9f6e6" /><path d="M22 54q1 8-3 12 9-1 14-7z" fill="#e9f6e6" />
  </Plate>],
  ['Mail', true, <Plate id="d5" from="#3a6eea" to="#5cc6fb">
    <rect x="12" y="22" width="56" height="36" rx="5" fill="#f0f0f0" /><path d="M13 25l22 22q5 5 10 0l22-22M14 56l18-16M66 56L48 40" stroke="#a9adb5" strokeWidth="2" />
  </Plate>],
  ['Maps', false, <Plate id="d6" from="#78d36d" to="#64c05f">
    <path d="M0 32l20 16v32H0z" fill="#e57cb8" /><path d="M0 0h6l74 74v6H62L0 22z" fill="#f1f1f3" /><path d="M54 0q2 20 26 28V17Q68 12 66 0z" fill="#dcdde0" /><path d="M18 0h24v80H18z" fill="#e4e6ea" /><path d="M22 0h16v40H22z" fill="#2f6fe8" /><path d="M44 56l26 24H42z" fill="#f4c63d" />
    <circle cx="30" cy="49" r="20" fill="#f2f4f8" /><circle cx="30" cy="49" r="17" fill="#2f76ee" /><path d="M30 36l9 23-9-5-9 5z" fill={W} />
  </Plate>],
  ['Photos', false, <Plate id="d7" from="#ffffff">
    {['#f39a2f', '#ecd42a', '#a9d343', '#57b56b', '#5c9fdc', '#6d6bc0', '#bd6fb4', '#e8463e'].map((c, i) => (
      <ellipse key={c} cx="40" cy="21" rx="10" ry="16" fill={c} fillOpacity="0.85" transform={`rotate(${i * 45} 40 40)`} />
    ))}
  </Plate>],
  ['FaceTime', false, <Plate id="d8" from="#86ee7c" to="#56bd4c">
    <rect x="11" y="22" width="40" height="36" rx="10" fill="#edf8eb" /><path d="M54 38l12-12q2-1 2 2v25q0 3-2 1L54 44z" fill="#dff3dc" />
  </Plate>],
  ['Calendar', false, <Plate id="d9" from="#fbfbf9" to="#f1f0ed">
    <path d="M0 0h80v25H0z" fill="#e45d50" /><DT x={40} y={19} size={15}>OUT.</DT><DT x={40} y={67} size={50} c="#1d1d1d" w={300}>9</DT>
  </Plate>],
  ['Contacts', false, <Plate id="d10" from="#b08a52" to="#9c6f3e">
    <path d="M77 28h3v14h-3z" fill="#58a2d8" /><path d="M77 44h3v12h-3z" fill="#e88e3c" /><path d="M0 0h6v80H0z" fill="#8d6537" />
    <circle cx="42" cy="40" r="25" stroke="#85602f" strokeWidth="2" /><ellipse cx="42" cy="34" rx="9" ry="10" fill="#8c6636" /><path d="M23 56q19-18 38 0-18 17-38 0z" fill="#8c6636" />
  </Plate>],
  ['Reminders', false, <Plate id="d11" from="#ffffff" to="#f2f0ed">
    {['#2f74f0', '#e5483c', '#ee9a35'].map((c, i) => (
      <g key={c}><circle cx="15" cy={20 + i * 20} r="4" fill={c} /><circle cx="15" cy={20 + i * 20} r="6" stroke={c} /><path d={`M29 ${20 + i * 20}h46`} stroke="#c9c9cb" strokeWidth="2" /></g>
    ))}
  </Plate>],
  ['Notes', true, <Plate id="d12" from="#f6f5f2" to="#e4e2dc">
    <path d="M0 0h80v20H0z" fill="#f7cf4b" /><path d="M0 40h80M0 60h80" stroke="#c9c7c2" strokeWidth="2" /><path d="M0 21h80" stroke="#a9a69d" strokeWidth="2" strokeDasharray="2 1" />
  </Plate>],
  ['Freeform', false, <Plate id="d13" from="#ffffff">
    <circle cx="32" cy="48" r="22" fill="#f07d4d" /><path d="M16 32q16-10 20 4z" fill="#f3ac35" /><rect x="27" y="10" width="43" height="43" rx="6" fill="#5cc4f3" fillOpacity="0.9" /><path d="M15 52q10-26 15-22c5 4-6 22 0 20s10-20 16-19-3 17 3 17 6-14 12-14 4 9 10 2" stroke="#173e73" strokeWidth="4" strokeLinecap="round" />
  </Plate>],
  ['TV', false, <Plate id="d14" from="#2b3733" to="#0b0e10">
    <g transform="translate(11 24)"><Apple size={29} /></g><DT x={54} y={52} size={30} w={500}>tv</DT>
  </Plate>],
  ['Music', false, <Plate id="d15" from="#ea5f74" to="#e6373d">
    <path d="M29 20l28-8v40h-5V28l-18 5v28h-5z" fill={W} /><ellipse cx="25" cy="59" rx="8.5" ry="7" fill={W} /><ellipse cx="49" cy="53" rx="8.5" ry="7" fill={W} />
  </Plate>],
  ['Keynote', false, <Plate id="d16" from="#5cc0f8" to="#2f60ea">
    <path d="M20 12h40l3 24H17z" fill="#f3f5f8" /><path d="M40 36v32" stroke="#e8edf5" strokeWidth="3" /><path d="M28 66h24v4H28z" fill="#e8edf5" /><circle cx="40" cy="21" r="7" fill="#e8503c" /><path d="M40 14a7 7 0 0 1 0 14z" fill="#42a9e0" /><path d="M33 21h14a7 7 0 0 1-14 0z" fill="#58bb52" />
  </Plate>],
  ['Numbers', false, <Plate id="d17" from="#92ef75" to="#4fc63c">
    <path d="M15 52h9v17h-9zM28 38h10v31H28zM42 12h9v57h-9zM55 26h10v43H55z" fill="#f3f8f0" />
  </Plate>],
  ['Pages', false, <Plate id="d18" from="#f5b54a" to="#ec8935">
    <path d="M62 14q6 0 3 6L25 64l-9 4 2-9z" fill="#f5f5f5" /><path d="M16 68l4-7 3 3z" fill="#5c5c5c" /><path d="M22 68h46" stroke="#f9d4a4" strokeWidth="3" />
  </Plate>],
  ['App Store', false, <Plate id="d19" from="#4fb4f4" to="#2b60dc">
    <g stroke={W} strokeWidth="7" strokeLinecap="round"><path d="M44 18L25 50M36 18l26 44M14 50h30M57 50h9M20 60l-1 2" /></g>
  </Plate>],
  ['System Settings', false, <Plate id="d20" from="#d3dde3" to="#93908d">
    <circle cx="40" cy="40" r="34" fill="#3c3e40" />
    {ring(48, (a) => <path key={a} d="M40 7v6" stroke="#b9bcbe" strokeWidth="2" transform={`rotate(${a} 40 40)`} />)}
    <circle cx="40" cy="40" r="27" stroke="#a9acae" strokeWidth="3" /><circle cx="40" cy="40" r="15" stroke="#8c8f92" strokeWidth="5" /><path d="M40 40h26M40 40L27 17M40 40L27 63" stroke="#b4b7b9" strokeWidth="4" /><circle cx="40" cy="40" r="5" fill="#6c6f71" />
  </Plate>, '1'],
  ['AutoCAD', true, <Plate id="d21" from="#ffffff">
    <path d="M19 8h46v45H19z" fill="#d62e52" /><path d="M9 14l10-6v45L9 58z" fill="#e0688a" /><path d="M14 53h51V18l5 1v53H14z" fill="#6b1428" /><DT x={42} y={43} size={34}>A</DT><DT x={41} y={67} size={14}>CAD</DT>
  </Plate>],
  null,
  ['Chrome', true, <Plate id="d22" from="#f7f7f7" to="#ececec">
    <path d="M40 40L10 23a34 34 0 0 1 60 0z" fill="#dd4f3f" /><path d="M40 40L70 23a35 35 0 0 1-30 51z" fill="#f3c044" /><path d="M40 40v34A34 34 0 0 1 10 23z" fill="#4da35a" /><path d="M40 23h30l-14 26-16 25-6-16z" fill="#f3c044" /><path d="M10 23a34 34 0 0 0 30 51l13-24-27-2z" fill="#4da35a" /><circle cx="40" cy="40" r="17" fill={W} /><circle cx="40" cy="40" r="13.5" fill="#4a83ea" />
  </Plate>],
  ['Word', true, <Plate id="d23" from="#ffffff">
    <path d="M21 13h45v14H21z" fill="#4c9ce6" /><path d="M21 27h45v13H21z" fill="#3a78d2" /><path d="M21 40h45v13H21z" fill="#2756b0" /><path d="M21 53h45v13H21z" fill="#1b3c85" /><rect x="7" y="25" width="30" height="30" rx="3" fill="#2450a8" /><DT x={22} y={48} size={21}>W</DT>
  </Plate>],
  ['WhatsApp', true, <Plate id="d24" from="#88f07d" to="#56bb4b">
    <path d="M10 70l5-17a29 29 0 1 1 11 12z" stroke={W} strokeWidth="5" /><path d="M27 30q4-6 7-2l3 7-3 4q4 8 12 11l4-4 8 4q0 7-8 7-20-2-23-27z" fill={W} />
  </Plate>],
  ['PowerPoint', true, <Plate id="d25" from="#ffffff">
    <circle cx="42" cy="40" r="27" fill="#c8583a" /><path d="M42 13a27 27 0 0 1 27 27H42z" fill="#f09676" /><path d="M42 13a27 27 0 0 0-27 27h27z" fill="#e07452" /><rect x="10" y="25" width="30" height="30" rx="3" fill="#b83d20" /><DT x={25} y={48} size={22}>P</DT>
  </Plate>],
  null,
  ['Trash', false, <svg width="80" height="90" viewBox="0 0 80 90" fill="none" aria-hidden="true" className="-mt-2">
    <defs><linearGradient id="bin"><stop offset="0" stopColor="#6d7072" /><stop offset="0.4" stopColor="#a7aaab" /><stop offset="1" stopColor="#5e6163" /></linearGradient></defs>
    <path d="M6 12l9-6 8-6 8 5 7-2 6-3 8 4 9 1 6 7-4 12H10z" fill="#e9e9e9" />
    <path d="M6 12q34 22 68 0l-9 72q-25 9-50 0z" fill="url(#bin)" fillOpacity="0.9" />
    <path d="M24 12l6-6 5 7zM48 14l5-7 6 8z" fill="#3a6ea8" /><path d="M18 17l7-5 4 7zM44 18l6-4 2 6z" fill="#b5533c" /><path d="M32 12l7 4-6 4z" fill="#3bb0a8" /><path d="M14 8l4 7M40 6l-3 8M62 8l-4 9" stroke="#6b6b6b" strokeWidth="2" />
  </svg>],
];

function Dock() {
  return (
    <nav aria-label="Dock" className="mx-[88px] mt-[2px] mb-[10px] flex h-32 items-start justify-between rounded-[38px] border-2 border-[#5b6580] bg-[linear-gradient(90deg,#2c3c58_0%,#303f5e_20%,#454a70_28%,#2a3c4c_34%,#333f5c_42%,#494b70_50%,#2a3848_58%,#333e5a_67%,#1f2c36_73%,#27364d_84%,#1f2c38_100%)] px-4 pt-[17px]">
      {apps.map((app, i) => {
        if (!app) return <div key={i} className="flex w-[22px] justify-center"><span className="-mt-1 h-24 w-[2px] bg-[#5d6b7a]" /></div>;
        const [name, running, art, badge] = app;
        return (
          <button key={name} aria-label={name} className="relative flex h-[107px] w-20 flex-col items-center justify-between">
            {art}
            {running && <span className="mb-[2px] size-2 rounded-full bg-[#a9b5d3]" />}
            {badge && <span className="absolute -top-[10px] -right-3 flex size-[38px] items-center justify-center rounded-full bg-[#df4b3e] font-['Inter',sans-serif] text-[24px] text-white">{badge}</span>}
          </button>
        );
      })}
    </nav>
  );
}

/* ---------- page ---------- */

export default function App() {
  return (
    <div className="flex min-h-screen flex-col bg-[linear-gradient(90deg,#1a2f3c_0%,#3a3f68_12%,#454a78_30%,#1e2b40_36%,#43467a_50%,#14202e_60%,#2a3152_75%,#0c1822_92%,#2c3152_100%)] font-['Noto_Sans',sans-serif]">
      <MenuBar />
      <main className="mt-[2px] flex flex-1 flex-col overflow-hidden rounded-t-[20px] rounded-b-[26px] border-t-2 border-[#8d919b] bg-[#3b4453]">
        <WindowHeader />
        <div className="flex flex-1">
          <aside className="flex w-[368px] shrink-0 flex-col bg-[#3c4350] font-['Liberation_Sans',sans-serif] shadow-[inset_1px_0_0_#4b5462]">
            <div className="flex h-[43px] items-stretch text-[24px]" role="tablist">
              <button role="tab" aria-selected="true" className="w-[159px] text-white">Drafting</button>
              <button role="tab" aria-selected="false" className="w-[162px] border-x-2 border-b-2 border-[#252b36] bg-[#2f333f] text-[#a3a6ac]">Modeling</button>
              <button aria-label="Collapse palette" className="flex flex-1 items-center justify-center border-b-2 border-[#252b36]">
                <Ico size={14}><path d="M14 4L4 16l10 12M30 4L20 16l10 12" stroke="#a7abb2" strokeWidth="4" /></Ico>
              </button>
            </div>
            {palettes.map((p) => <Palette key={p.title} data={p} />)}
            <div className="mt-auto flex items-center gap-[34px] pb-3 pl-[31px]">
              <button aria-label="Add palette"><Ico size={22} box={22}><path d="M11 0v22M0 11h22" stroke={G} strokeWidth="2" /></Ico></button>
              <button aria-label="Palette list">
                <svg width="28" height="22" viewBox="0 0 28 22" fill="none" aria-hidden="true"><path d="M6 2h22M6 8h22M6 20h22" stroke={G} strokeWidth="2" /><path d="M0 12h18v4H0zM24 11l3 5h-6z" fill={G} /></svg>
              </button>
            </div>
          </aside>
          <div className="flex min-w-0 flex-1 flex-col">
            <div className="flex flex-1">
              <section aria-label="Drawing" className="relative flex min-w-0 flex-1 flex-col bg-[#212830]">
                <Model />
                <div className="relative flex h-[42px] items-center text-[24px] text-[#b0b3b6]">
                  <button className="w-[70px] pl-1 text-center">+</button>
                  <button className="flex items-center gap-[10px]"><span className="h-6 w-[2px] bg-[#a5a8ac]" />Custom View</button>
                  <button className="ml-[18px] flex items-center gap-[10px]"><span className="h-6 w-[2px] bg-[#a5a8ac]" />X-Ray</button>
                </div>
                <ViewCube />
                <CommandLine />
              </section>
              <ReferencePanel />
            </div>
            <StatusBar />
          </div>
        </div>
      </main>
      <Dock />
    </div>
  );
}
